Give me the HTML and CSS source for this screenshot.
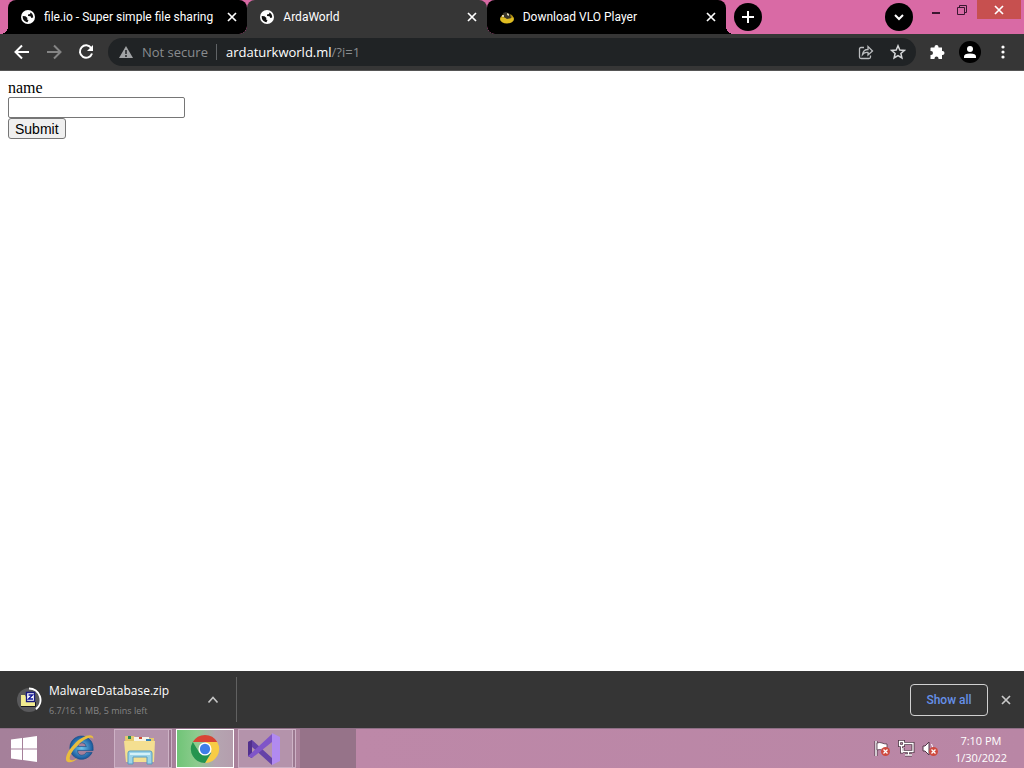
FILE: index.html
```html
<!DOCTYPE html>
<html lang="en">
<head>
<meta charset="utf-8">
<title>ArdaWorld</title>
<link rel="stylesheet" href="styles.css">
</head>
<body>
<svg class="defs" aria-hidden="true">
  <symbol id="globe" viewBox="0 0 14 14"><circle cx="7" cy="7" r="7" fill="#fff"/><path d="M1.700 6 4.500 6.300 6.500 8 6 9.500 7.500 10 6.500 12.200C3.500 11.800 1.500 9.500 1.700 6ZM7.500 2 9.500 2.400 9 4 7 4.500 7 6 9.500 6.200 10.300 8 12.200 7.500C12.400 4.500 10.500 2.200 7.500 2Z" fill="#111"/></symbol>
  <symbol id="cross" viewBox="0 0 10 10"><path d="m1 1 8 8M9 1 1 9" fill="none" stroke="currentColor" stroke-width="1.700"/></symbol>
  <symbol id="error" viewBox="0 0 9 9"><circle cx="4.500" cy="4.500" r="4.500" fill="#cf4a3f"/><path d="m2.500 2.500 4 4m0-4-4 4" stroke="#fff" stroke-width="1.300"/></symbol>
</svg>
<div class="screen">
  <header class="titlebar">
    <div class="tabs">
      <div class="tab tab-first"><svg class="favicon"><use href="#globe"/></svg><button class="tab-title">file.io - Super simple file sharing</button><button class="tab-close" aria-label="Close file.io tab"><svg><use href="#cross"/></svg></button></div>
      <div class="tab tab-active"><svg class="favicon"><use href="#globe"/></svg><button class="tab-title">ArdaWorld</button><button class="tab-close" aria-label="Close ArdaWorld tab"><svg><use href="#cross"/></svg></button></div>
      <div class="tab tab-last"><svg class="favicon" viewBox="0 0 14 14"><ellipse cx="7" cy="9" rx="7" ry="4.500" fill="#dfbd22"/><path d="M1 8c3-2 8 3 12-1l-1-2-5-2-5 2Z" fill="#a68610"/><path d="m3 3 3-1 4 2 1 4-4 1-3-2Z" fill="#39352a"/><path d="m7 3 2 1v2L7 5ZM2 5h2v2H2Z" fill="#ddd5b3"/></svg><button class="tab-title">Download VLO Player</button><button class="tab-close" aria-label="Close Download VLO Player tab"><svg><use href="#cross"/></svg></button></div>
    </div>
    <button class="round" aria-label="New tab"><svg viewBox="0 0 14 14"><path d="M7 1v12M1 7h12" stroke="#fff" stroke-width="2"/></svg></button>
    <div class="window-controls">
      <button class="round tab-search" aria-label="Search tabs"><svg viewBox="0 0 14 14"><path d="m3 5 4 4 4-4" fill="none" stroke="#fff" stroke-width="2"/></svg></button>
      <button class="control" aria-label="Minimize"><svg viewBox="0 0 12 12"><path d="M2 9h8" stroke="#3a1730" stroke-width="2"/></svg></button>
      <button class="control" aria-label="Restore"><svg viewBox="0 0 12 12"><path d="M1.500 3.500h7v7h-7ZM3.500 3.500v-2h7v7h-2" fill="none" stroke="#3a1730"/></svg></button>
      <button class="window-close" aria-label="Close window"><svg><use href="#cross"/></svg></button>
    </div>
  </header>

  <nav class="toolbar">
    <button class="nav-button" aria-label="Back"><svg viewBox="0 0 16 16"><path d="M15 8H2M8 1.500 1.500 8 8 14.500" fill="none" stroke="#fff" stroke-width="2"/></svg></button>
    <button class="nav-button" aria-label="Forward"><svg viewBox="0 0 16 16"><path d="M1 8h13M8 1.500 14.500 8 8 14.500" fill="none" stroke="#858585" stroke-width="2"/></svg></button>
    <button class="nav-button" aria-label="Reload"><svg viewBox="0 0 16 16"><path d="M13.200 4A6.200 6.200 0 1 0 14 9.500" fill="none" stroke="#fff" stroke-width="2"/><path d="M15 1v6H9Z" fill="#fff"/></svg></button>
    <div class="omnibox">
      <svg class="warning" viewBox="0 0 14 12"><path d="M7 0 14 12H0Z" fill="#a0a2a4"/><path d="M7 4v4M7 9v2" stroke="#202325" stroke-width="1.500"/></svg>
      <span class="insecure">Not secure</span>
      <a class="address" href="#"><b>ardaturkworld.ml</b>/?i=1</a>
      <button class="icon-button" aria-label="Share"><svg viewBox="0 0 16 16"><path d="M6 3.500H3Q1.500 3.500 1.500 5v8q0 1.500 1.500 1.500h8q1.500 0 1.500-1.500v-1.500M4.500 10.500C5 7 7 5.500 10 5.500v-3L14.500 7 10 11V8.500Q6.500 8 4.500 10.500Z" fill="none" stroke="#bbbdbf" stroke-width="1.300"/></svg></button>
      <button class="icon-button" aria-label="Bookmark this tab"><svg viewBox="0 0 16 16"><path d="m8 1.800 1.800 4.200 4.600.4-3.500 3.100 1 4.500L8 11.600 4.100 14l1-4.500-3.500-3.100L6.200 6Z" fill="none" stroke="#d5d7d9" stroke-width="1.500"/></svg></button>
    </div>
    <div class="toolbar-actions">
      <button class="icon-button" aria-label="Extensions"><svg viewBox="0 0 16 16"><path d="M2 3.500h3.500V3a2 2 0 0 1 4 0v.500H13V7h.500a2 2 0 0 1 0 4H13v4H9.500v-.500a2 2 0 0 0-4 0v.500H1.500v-4H2a2 2 0 0 0 0-4h-.500V4Z" fill="#fff"/></svg></button>
      <button class="profile" aria-label="Profile"><svg viewBox="0 0 14 14"><circle cx="7" cy="4" r="3" fill="#fff"/><path d="M1 13v-1.500Q1 8.500 7 8.500t6 3V13Z" fill="#fff"/></svg></button>
      <button class="icon-button" aria-label="Browser menu"><svg viewBox="0 0 16 16" fill="#fff"><circle cx="8" cy="3" r="1.600"/><circle cx="8" cy="8" r="1.600"/><circle cx="8" cy="13" r="1.600"/></svg></button>
    </div>
  </nav>

  <main class="page">
    <form>
      <label for="name">name</label>
      <input id="name" type="text">
      <button class="submit" type="button">Submit</button>
    </form>
  </main>

  <section class="downloads" aria-label="Downloads">
    <div class="download">
      <svg class="file-icon" viewBox="0 0 26 26"><circle cx="13" cy="13" r="12" fill="#59595b"/><path d="M13 1.500a11.500 11.500 0 0 1 7 20.600" fill="none" stroke="#fff" stroke-width="2"/><path d="M5 8h4l1 2h9v9H5Z" fill="#f2eb90"/><path d="M5 19.500h14.500V15" fill="none" stroke="#161620"/><path d="M10.500 5.500h8v9h-8Z" fill="#fff" stroke="#191a80" stroke-width="1.300"/><path d="M12.500 8h4l-4 4h4.500" fill="none" stroke="#15199a" stroke-width="1.400"/></svg>
      <div class="file-text"><div class="filename">MalwareDatabase.zip</div><div class="progress">6.7/16.1 MB, 5 mins left</div></div>
      <button class="icon-button" aria-label="Download options"><svg viewBox="0 0 16 16"><path d="m3.500 10.500 4.500-5 4.500 5" fill="none" stroke="#c6c6c6" stroke-width="1.600"/></svg></button>
    </div>
    <button class="show-all">Show all</button>
    <button class="shelf-close" aria-label="Close downloads"><svg><use href="#cross"/></svg></button>
  </section>

  <footer class="taskbar">
    <button class="start" aria-label="Start"><svg viewBox="0 0 28 28" fill="#fff"><path d="M1 4.500 12 3v10.500H1ZM13 2.900 27 1v12.500H13ZM1 14.500h11V25L1 23.500ZM13 14.500h14V27l-14-1.900Z"/></svg></button>
    <button class="ie" aria-label="Internet Explorer"><svg viewBox="0 0 32 32"><defs><radialGradient id="blue"><stop stop-color="#71c9ee"/><stop offset="1" stop-color="#17569b"/></radialGradient></defs><path d="M28 20A12 12 0 1 1 29 16v2H13q0 5 4.500 5 3 0 4.500-3ZM13 14h9q-1-4-4.500-4T13 14Z" fill="url(#blue)" fill-rule="evenodd" stroke="#174e85" stroke-width=".7"/><path d="M29 7C31-1 18 2 9 12 1 20-1 29 3 30c3 1 7-1 10-4-4 2-7 3-8 1-1-3 3-10 9-15 6-6 15-10 15-5Z" fill="#e9bd3d"/></svg></button>
    <button class="task" aria-label="File Explorer"><svg viewBox="0 0 34 32"><path d="M2 3h9l2 2h18v24H3Z" fill="#e5c96f"/><path d="M5 3h3v3H5Z" fill="#258b56"/><path d="M11 4h15v4H11Z" fill="#f6f4e5"/><path d="M16 4h3v2h-3Z" fill="#d04b36"/><path d="M23 6h5v2h-5Z" fill="#3582b8"/><path d="M1 8h31l-1 21H3Z" fill="#f4df91"/><path d="M5 31V20q0-2 2-2h20q2 0 2 2v11h-5v-7H10v7Z" fill="#9cd4e8" stroke="#579bc0"/><path d="M7 21h20" stroke="#d4f1f8" stroke-width="2"/></svg></button>
    <button class="task task-active" aria-label="Chrome"><svg viewBox="0 0 32 32"><path d="M3 8.500A15 15 0 0 1 29 8.500H16Z" fill="#d94435"/><path d="M29 8.500A15 15 0 0 1 16 31l7-11-7-11.500Z" fill="#f7cc46"/><path d="M16 31A15 15 0 0 1 3 8.500L10 20l12.500 0Z" fill="#24944f"/><circle cx="16" cy="16" r="7" fill="#fff"/><circle cx="16" cy="16" r="5.500" fill="#3f7ee8"/></svg></button>
    <button class="task" aria-label="Visual Studio"><svg viewBox="0 0 34 32"><path d="m1 9 4-2 20 18v7L5 14v11l-4-2Z" fill="#6542a8"/><path d="M1 9 5 7v18l-4-2Z" fill="#51308d"/><path d="m1 23 4 2L25 9V1L12 13Z" fill="#8055c8"/><path d="m25 0 8 4v24l-8 4Z" fill="#b18af0"/></svg></button>
    <div class="task-space"></div>
    <div class="tray">
      <svg viewBox="0 0 17 17"><path d="M2 1v15" stroke="#503547" stroke-width="3"/><path d="M2 1v15" stroke="#fff" stroke-width="1.500"/><path d="M3 3q3-1 5 0t5 1v6q-3 1-5 0t-5 0Z" fill="#fff" stroke="#503547" stroke-width=".8"/><use href="#error" x="7" y="7" width="9" height="9"/></svg>
      <svg viewBox="0 0 17 17"><path d="M6 3.500h9v8H5V8M7 15h7M10.500 12v3M1.500 1.500h4v4h-4ZM3.500 6v6H5" fill="none" stroke="#513747" stroke-width="3"/><path d="M6 3.500h9v8H5V8M7 15h7M10.500 12v3M1.500 1.500h4v4h-4ZM3.500 6v6H5" fill="none" stroke="#fff" stroke-width="1.300"/></svg>
      <svg viewBox="0 0 17 17"><path d="M1 6h2l4-4v13l-4-4H1Z" fill="#fff" stroke="#503547"/><path d="M9.500 4q3 4 0 9" fill="none" stroke="#fff"/><use href="#error" x="7" y="7" width="9" height="9"/></svg>
    </div>
    <time class="clock" datetime="2022-01-30T19:10">7:10 PM<br>1/30/2022</time>
  </footer>
</div>
</body>
</html>
```

FILE: styles.css
```css
* { box-sizing: border-box; }
body { margin: 0; font: 12px/16px "Open Sans", "Noto Sans", sans-serif; }
button { margin: 0; padding: 0; border: 0; background: none; color: inherit; font: inherit; }
svg { display: block; flex: none; }
.defs { position: absolute; width: 0; height: 0; }
.screen { display: flex; flex-direction: column; height: 100vh; }

.titlebar { display: flex; height: 34px; padding-left: 8px; background: #d96aa5; color: #fff; }
.tabs { display: flex; flex: 0 1 718px; min-width: 0; margin-right: 8px; }
.tab { position: relative; display: flex; align-items: center; flex: 1; min-width: 0; padding: 0 10px 0 13px; border-radius: 8px; background: #000; }
.tab-active { background: #363636; border-radius: 8px 8px 0 0; }
.tab-first { border-radius: 8px 8px 8px 0; }
.tab-last { border-radius: 8px 8px 0 8px; }
.tab-active::before, .tab-active::after, .tab-first::before, .tab-last::after { content: ""; position: absolute; bottom: 0; width: 8px; height: 8px; }
.tab-active::before { right: 100%; background: radial-gradient(circle at 0 0, transparent 8px, #363636 8px); }
.tab-active::after { left: 100%; background: radial-gradient(circle at 100% 0, transparent 8px, #363636 8px); }
.tab-first::before { right: 100%; background: radial-gradient(circle at 0 0, transparent 8px, #000 8px); }
.tab-last::after { left: 100%; background: radial-gradient(circle at 100% 0, transparent 8px, #000 8px); }
.favicon { width: 14px; height: 14px; margin-right: 9px; }
.tab-title { flex: 1; min-width: 0; overflow: hidden; text-align: left; white-space: nowrap; font-family: Roboto, "Open Sans", sans-serif; }
.tab-close svg { width: 10px; height: 10px; }
.round { display: grid; place-items: center; align-self: center; width: 28px; height: 28px; border-radius: 50%; background: #000; }
.round svg { width: 14px; height: 14px; }
.window-controls { display: flex; align-items: flex-start; margin-left: auto; padding-right: 3px; }
.tab-search { margin-right: 10px; }
.control { display: grid; place-items: center; width: 26px; height: 19px; }
.control svg { width: 12px; height: 12px; }
.window-close { display: grid; place-items: center; width: 44px; height: 19px; margin-left: 2px; background: #c7504f; }
.window-close svg { width: 10px; height: 10px; }

.toolbar { display: flex; align-items: center; height: 37px; padding-left: 6px; border-bottom: 1px solid #555; background: #363636; color: #fff; }
.nav-button { display: grid; place-items: center; width: 32px; height: 32px; }
.nav-button svg { width: 16px; height: 16px; }
.omnibox { display: flex; align-items: center; flex: 1; height: 28px; margin-left: 6px; padding: 0 10px 0 11px; border-radius: 14px; background: #202325; font-size: 13px; }
.warning { width: 14px; height: 12px; }
.insecure { margin-left: 9px; padding-right: 8px; border-right: 1px solid #606366; color: #898c8f; }
.address { flex: 1; margin-left: 9px; color: #898c8f; text-decoration: none; }
.address b { color: #fff; font-weight: 400; }
.icon-button { display: grid; place-items: center; width: 16px; height: 16px; }
.icon-button svg { width: 16px; height: 16px; }
.omnibox .icon-button + .icon-button { margin-left: 16px; }
.toolbar-actions { display: flex; align-items: center; gap: 14px; padding: 0 13px; }
.profile { display: grid; place-items: center; width: 22px; height: 22px; border-radius: 50%; background: #000; }
.profile svg { width: 14px; height: 14px; }

.page { flex: 1; padding: 8px; background: #fff; color: #000; }
.page form { display: flex; flex-direction: column; align-items: flex-start; font: 16px/18px "Liberation Serif", serif; }
.page input { width: 177px; height: 21px; padding: 1px 2px; border: 1px solid #767676; border-radius: 2px; }
.submit { height: 21px; padding: 0 6px; border: 1px solid #767676; border-radius: 3px; background: #efefef; font: 14px/18px "Liberation Sans", sans-serif; }

.downloads { display: flex; align-items: center; height: 57px; padding-right: 13px; background: #353535; color: #fff; }
.download { display: flex; align-items: center; width: 237px; height: 45px; padding: 0 15px 0 16px; border-right: 1px solid #616161; }
.file-icon { width: 26px; height: 26px; }
.file-text { flex: 1; margin-left: 7px; padding-top: 2px; white-space: nowrap; }
.filename { line-height: 20px; }
.progress { color: #858585; font-size: 9px; line-height: 20px; }
.show-all { width: 78px; height: 32px; margin-left: auto; border: 1px solid #d0d0d0; border-radius: 4px; color: #6690e9; font-family: Roboto, "Open Sans", sans-serif; font-weight: 500; }
.shelf-close { margin-left: 13px; color: #c9c9c9; }
.shelf-close svg { width: 10px; height: 10px; }

.taskbar { display: flex; align-items: center; height: 40px; border-top: 1px solid #8f7087; background: linear-gradient(90deg, #a5809a, #aa819b 356px, #bd88a8 356px, #b986a5); color: #fff; }
.start { padding: 0 10px; }
.start svg { width: 28px; height: 28px; }
.ie { padding: 0 18px 0 17px; }
.ie svg { width: 31px; height: 31px; }
.task { display: grid; place-items: center; width: 58px; height: 39px; margin-right: 4px; border: 1px solid #cdb1c5; background: linear-gradient(90deg, #b493ab 53px, #ceb3c6 53px 54px, #9b7890 54px); }
.task svg { width: 34px; height: 32px; margin-right: 6px; }
.task-active { border: 1px solid #fff; background: linear-gradient(90deg, #70c477, #8dcc8e 20px, #b5a5b1 38px, #b49ead); }
.task-active svg { width: 30px; height: 30px; margin: 0; }
.task-space { align-self: stretch; width: 56px; background: #967389; }
.tray { display: flex; gap: 7px; margin-left: auto; }
.tray svg { width: 17px; height: 17px; }
.clock { margin: 0 17px 0 16px; font-size: 11px; line-height: 17px; text-align: center; }
```
